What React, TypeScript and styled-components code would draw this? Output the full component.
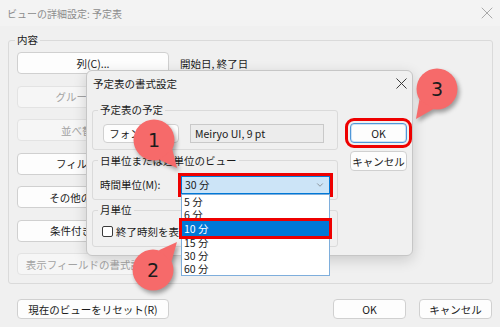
import React from "react";
import styled, { createGlobalStyle, css } from "styled-components";
import { X, ChevronDown } from "lucide-react";

const GlobalStyle = createGlobalStyle`
  html, body {
    margin: 0;
    padding: 0;
  }
  body {
    width: 500px;
    height: 327px;
    overflow: hidden;
    background: #f0f0f0;
    font-family: "Noto Sans CJK JP", "Noto Sans", sans-serif;
    font-size: 10.5px;
    color: #1a1a1a;
  }
  * {
    box-sizing: border-box;
  }
`;

const Window = styled.div`
  position: relative;
  width: 500px;
  height: 327px;
  display: flex;
  flex-direction: column;
  background: #f0f0f0;
`;
const TitleBar = styled.div`
  height: 26px;
  flex: none;
  display: flex;
  align-items: center;
  justify-content: space-between;
  padding: 0 3px 0 7px;
  background: #f3f3f3;
  color: #8c8c8c;
  font-size: 10px;
`;
const Group = styled.fieldset<{ $pad: string }>`
  margin: 0;
  min-width: 0;
  border: 1px solid #dadada;
  border-radius: 3px;
  padding: ${(p) => p.$pad};
`;
const Legend = styled.legend`
  padding: 0 2px;
  margin-left: -2px;
  line-height: 14px;
  font-size: 10.5px;
  color: #1a1a1a;
`;
const MainGroup = styled(Group)`
  margin: 7px 7px 0 8px;
`;
const OptionList = styled.div`
  display: flex;
  flex-direction: column;
  gap: 11.5px;
`;
const Row = styled.div<{ $indent?: number; $h?: number }>`
  display: flex;
  align-items: center;
  height: ${(p) => p.$h ?? 22}px;
  padding-left: ${(p) => p.$indent ?? 0}px;
  gap: 11px;
  white-space: nowrap;
`;
const PushButton = styled.button<{
  $w: number;
  $h?: number;
  $default?: boolean;
  $marked?: boolean;
}>`
  flex: none;
  width: ${(p) => p.$w}px;
  height: ${(p) => p.$h ?? 22}px;
  margin: 0;
  padding: 0;
  display: flex;
  align-items: center;
  justify-content: center;
  white-space: nowrap;
  font-family: inherit;
  font-size: 10.5px;
  color: #1a1a1a;
  background: #fdfdfd;
  border: 1px solid #d0d0d0;
  border-radius: 4px;
  &:disabled {
    color: #a3a3a3;
    background: #f6f6f6;
    border-color: #e3e3e3;
  }
  ${(p) =>
    p.$default &&
    css`
      border-color: #4f97d8;
      box-shadow: inset 0 0 0 1px #cfe3f5;
    `}
  ${(p) =>
    p.$marked &&
    css`
      outline: 3px solid #ee0000;
      outline-offset: 2px;
    `}
`;
const Note = styled.span`
  color: #1a1a1a;
`;
const BottomBar = styled.div`
  display: flex;
  align-items: center;
  gap: 13px;
  padding: 15px 8px 0 17px;
`;
const Spacer = styled.div`
  flex: 1;
`;

/* the modal dialog lies over the main window */
const Dialog = styled.div`
  position: absolute;
  left: 86px;
  top: 70px;
  width: 327px;
  height: 186px;
  display: flex;
  flex-direction: column;
  background: #f0f0f0;
  border: 1px solid #c6c6c6;
  border-radius: 6px;
  box-shadow: 0 4px 14px rgba(0, 0, 0, 0.16);
`;
const DialogTitle = styled.div`
  height: 25px;
  flex: none;
  display: flex;
  align-items: center;
  justify-content: space-between;
  padding: 0 1px 0 6px;
  color: #1a1a1a;
`;
const DialogBody = styled.div`
  display: flex;
  gap: 12px;
  padding: 7px 5px 0 5px;
`;
const LeftCol = styled.div`
  width: 247px;
  display: flex;
  flex-direction: column;
  gap: 3.5px;
`;
const RightCol = styled.div`
  display: flex;
  flex-direction: column;
  gap: 8px;
  padding-top: 20px;
`;
const ReadonlyField = styled.div`
  width: 134px;
  height: 19px;
  display: flex;
  align-items: center;
  padding-left: 4px;
  background: #ececec;
  border: 1px solid #c9c9c9;
  font-size: 10.5px;
`;
const FieldLabel = styled.span`
  width: 81px;
  flex: none;
`;
const ComboWrap = styled.div`
  position: relative;
  width: 149px;
`;
const Combo = styled.div<{ $marked?: boolean }>`
  height: 18px;
  display: flex;
  align-items: center;
  justify-content: space-between;
  padding: 0 4px 0 3px;
  background: #cce4f7;
  border: 1px solid #0078d7;
  color: #1a1a1a;
  ${(p) =>
    p.$marked &&
    css`
      outline: 3px solid #ee0000;
    `}
`;
const DropList = styled.ul`
  position: absolute;
  top: 100%;
  left: 0;
  width: 149px;
  margin: 0;
  padding: 0;
  list-style: none;
  background: #ffffff;
  border: 1px solid #7eaedc;
  z-index: 2;
`;
const DropItem = styled.li<{ $selected?: boolean; $marked?: boolean }>`
  height: 13px;
  line-height: 13px;
  padding-left: 2px;
  color: #1a1a1a;
  ${(p) =>
    p.$selected &&
    css`
      background: #0078d7;
      color: #ffffff;
      height: 15px;
      line-height: 15px;
    `}
  ${(p) =>
    p.$marked &&
    css`
      outline: 3px solid #ee0000;
      outline-offset: 0;
    `}
`;
const CheckBox = styled.span`
  width: 11px;
  height: 11px;
  flex: none;
  background: #ffffff;
  border: 1px solid #3a3a3a;
  border-radius: 2px;
`;
const CheckRow = styled(Row)`
  gap: 3px;
`;

/* numbered callouts drawn over the screenshot */
const BadgeBox = styled.div<{ $x: number; $y: number }>`
  position: absolute;
  left: ${(p) => p.$x - 35}px;
  top: ${(p) => p.$y - 35}px;
  width: 70px;
  height: 70px;
  display: grid;
  place-items: center;
  z-index: 5;
  pointer-events: none;
`;
const BadgeShape = styled.svg`
  position: absolute;
  inset: 0;
  overflow: visible;
  filter: drop-shadow(2px 3px 2px rgba(0, 0, 0, 0.35));
`;
const BadgeNum = styled.span`
  position: relative;
  font-family: "DejaVu Sans", sans-serif;
  font-size: 19px;
  line-height: 1;
  color: #1c1c1c;
`;

type BadgeProps = { n: string; x: number; y: number; tipX: number; tipY: number };

const Badge: React.FC<BadgeProps> = ({ n, x, y, tipX, tipY }) => {
  const r = 20.5;
  const tx = tipX - x + 35;
  const ty = tipY - y + 35;
  const a = Math.atan2(ty - 35, tx - 35);
  const p1 = [35 + r * Math.cos(a - 0.42), 35 + r * Math.sin(a - 0.42)];
  const p2 = [35 + r * Math.cos(a + 0.42), 35 + r * Math.sin(a + 0.42)];
  return (
    <BadgeBox $x={x} $y={y}>
      <BadgeShape width="70" height="70" viewBox="0 0 70 70">
        <circle cx="35" cy="35" r={r} fill="#f66a6a" />
        <path d={`M${p1[0]} ${p1[1]} L${tx} ${ty} L${p2[0]} ${p2[1]} Z`} fill="#f66a6a" />
      </BadgeShape>
      <BadgeNum>{n}</BadgeNum>
    </BadgeBox>
  );
};

const options = [
  { label: "列(C)...", note: "開始日, 終了日" },
  { label: "グループ化(G)...", disabled: true },
  { label: "並べ替え(T)...", disabled: true },
  { label: "フィルター(F)..." },
  { label: "その他の設定(M)..." },
  { label: "条件付き書式(D)..." },
  { label: "表示フィールドの書式設定...", disabled: true },
];

const scales = ["5 分", "6 分", "10 分", "15 分", "30 分", "60 分"];

const App: React.FC = () => {
  return (
    <Window>
      <GlobalStyle />
      <TitleBar>
        <span>ビューの詳細設定: 予定表</span>
        <X size={20} strokeWidth={1} color="#9a9a9a" />
      </TitleBar>

      <MainGroup $pad="5px 8px 8px 8px">
        <Legend>内容</Legend>
        <OptionList>
          {options.map((o) => (
            <Row key={o.label}>
              <PushButton $w={152} disabled={o.disabled}>
                {o.label}
              </PushButton>
              {o.note && <Note>{o.note}</Note>}
            </Row>
          ))}
        </OptionList>
      </MainGroup>

      <BottomBar>
        <PushButton $w={152} $h={20}>
          現在のビューをリセット(R)
        </PushButton>
        <Spacer />
        <PushButton $w={73} $h={20}>
          OK
        </PushButton>
        <PushButton $w={73} $h={20}>
          キャンセル
        </PushButton>
      </BottomBar>

      <Dialog>
        <DialogTitle>
          <span>予定表の書式設定</span>
          <X size={19} strokeWidth={1.2} color="#333" />
        </DialogTitle>
        <DialogBody>
          <LeftCol>
            <Group $pad="7px 7px 6px 7px">
              <Legend>予定表の予定</Legend>
              <Row $indent={3} $h={19}>
                <PushButton $w={76} $h={19}>
                  フォント(F)...
                </PushButton>
                <ReadonlyField>Meiryo UI, 9 pt</ReadonlyField>
              </Row>
            </Group>
            <Group $pad="8px 7px 5px 7px">
              <Legend>日単位または週単位のビュー</Legend>
              <Row $h={18} style={{ gap: 0 }}>
                <FieldLabel>時間単位(M):</FieldLabel>
                <ComboWrap>
                  <Combo $marked>
                    <span>30 分</span>
                    <ChevronDown size={10} strokeWidth={1.5} color="#666" />
                  </Combo>
                  <DropList>
                    {scales.map((s) => (
                      <DropItem key={s} $selected={s === "10 分"} $marked={s === "10 分"}>
                        {s}
                      </DropItem>
                    ))}
                  </DropList>
                </ComboWrap>
              </Row>
            </Group>
            <Group $pad="7px 7px 8px 7px">
              <Legend>月単位</Legend>
              <CheckRow $indent={2} $h={14}>
                <CheckBox />
                <span>終了時刻を表示する(E)</span>
              </CheckRow>
            </Group>
          </LeftCol>
          <RightCol>
            <PushButton $w={57} $h={20} $default $marked>
              OK
            </PushButton>
            <PushButton $w={57} $h={20}>
              キャンセル
            </PushButton>
          </RightCol>
        </DialogBody>
      </Dialog>

      <Badge n="1" x={154} y={140} tipX={177} tipY={168} />
      <Badge n="2" x={153} y={270} tipX={177} tipY={242} />
      <Badge n="3" x={437} y={89} tipX={416} tipY={119} />
    </Window>
  );
};

export default App;
